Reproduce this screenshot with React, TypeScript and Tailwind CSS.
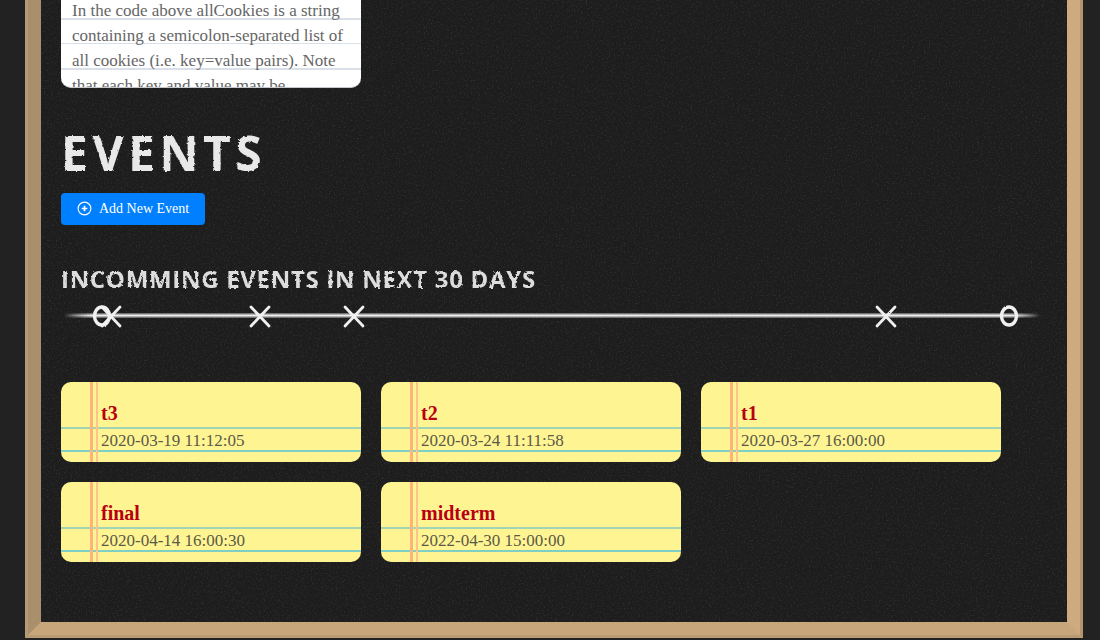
const events = [
    { title: 't3', date: '2020-03-19 11:12:05' },
    { title: 't2', date: '2020-03-24 11:11:58' },
    { title: 't1', date: '2020-03-27 16:00:00' },
    { title: 'final', date: '2020-04-14 16:00:30' },
    { title: 'midterm', date: '2022-04-30 15:00:00' },
];

const crosses = [111, 260, 354, 886];

function ChalkFilters() {
    return (
        <svg className="absolute h-0 w-0">
            <defs>
                <filter id="chalk" x="-5%" y="-10%" width="110%" height="120%">
                    <feTurbulence type="fractalNoise" baseFrequency="0.3" numOctaves="2" seed="4" result="noise" />
                    <feDisplacementMap in="SourceGraphic" in2="noise" scale="3" />
                </filter>
                <filter id="rough" x="-2%" y="-20%" width="104%" height="140%">
                    <feTurbulence type="fractalNoise" baseFrequency="0.5" numOctaves="2" seed="7" result="noise" />
                    <feDisplacementMap in="SourceGraphic" in2="noise" scale="1.6" />
                </filter>
                <filter id="grain">
                    <feTurbulence type="fractalNoise" baseFrequency="0.6" numOctaves="3" seed="9" />
                    <feColorMatrix values="0 0 0 0 1  0 0 0 0 1  0 0 0 0 1  1.2 0 0 0 -0.62" />
                </filter>
            </defs>
        </svg>
    );
}

function Timeline() {
    return (
        <svg className="mt-[7px] block h-[30px] w-[986px]" viewBox="0 0 986 30">
            <defs>
                <linearGradient id="fade">
                    <stop offset="0" stopColor="#fff" stopOpacity="0" />
                    <stop offset="0.03" stopColor="#f0f0f0" />
                    <stop offset="0.97" stopColor="#f0f0f0" />
                    <stop offset="1" stopColor="#fff" stopOpacity="0" />
                </linearGradient>
            </defs>
            <rect x="3" y="11" width="976" height="5" fill="url(#fade)" opacity="0.4" />
            <rect x="3" y="12.5" width="976" height="2" fill="url(#fade)" />
            <g stroke="#f0f0f0" strokeWidth="2.8" fill="none" strokeLinecap="round" filter="url(#rough)">
                {crosses.map((x) => (
                    <path key={x} d={`M${x - 61 - 9} 5 L${x - 61 + 9} 24 M${x - 61 + 9} 5 L${x - 61 - 9} 24`} />
                ))}
                <ellipse cx="41" cy="14" rx="7.5" ry="9" strokeWidth="3.4" />
                <ellipse cx="948" cy="14" rx="7.5" ry="9" strokeWidth="3.4" />
            </g>
        </svg>
    );
}

function EventCard({ title, date }: { title: string; date: string }) {
    return (
        <div className="h-20 w-[300px] overflow-hidden rounded-[10px] bg-[#fff492] bg-[linear-gradient(to_right,transparent_29px,#ffb27a_29px,#ffb27a_32px,transparent_32px,transparent_35px,#ffc48a_35px,#ffc48a_37px,transparent_37px),linear-gradient(to_bottom,transparent_45px,#a0d4b4_45px,#a0d4b4_47px,transparent_47px,transparent_68.5px,#80cfc4_68.5px,#80cfc4_70.5px,transparent_70.5px)] pl-10 pt-[18px]">
            <div className="text-[20px] font-bold leading-[26px] text-[#b80014]">{title}</div>
            <div className="text-[17px] leading-[30px] text-[#5a5a48]">{date}</div>
        </div>
    );
}

export default function App() {
    return (
        <div className="h-[640px] overflow-hidden bg-[#222222] pl-[25px] pr-[17px] font-['Liberation_Serif',serif]">
            <ChalkFilters />
            <div className="h-[638px] border-x-[3px] border-b-[3px] border-l-[#b39a78] border-r-[#b3946f] border-b-[#b89a74]">
                <div className="relative h-[635px] border-x-[13px] border-b-[13px] border-l-[#a98f6c] border-r-[#cdaa80] border-b-[#c8a67c] bg-[#1d1d1d] px-5">
                    <svg className="pointer-events-none absolute inset-0 h-full w-full opacity-20">
                        <rect width="100%" height="100%" filter="url(#grain)" />
                    </svg>
                    <div className="relative">
                        <div className="h-[88px] w-[300px] overflow-hidden rounded-b-[10px] border-b border-[#c4c8cc] bg-white">
                            <div className="-mt-[2px] bg-[repeating-linear-gradient(to_bottom,transparent_0,transparent_20px,#d9e0e8_20px,#d9e0e8_21.5px,transparent_21.5px,transparent_25px)] px-[11px] text-[17px] leading-[25px] text-[#666666]">
                                In the code above allCookies is a string containing a semicolon-separated list of all cookies (i.e. key=value pairs). Note that each key and value may be surrounded by whitespace
                            </div>
                        </div>

                        <h1 className="mt-[38px] font-['Open_Sans',sans-serif] text-[48px] font-bold leading-[54px] tracking-[4.5px] text-[#e8e8e8] [filter:url(#chalk)]">
                            EVENTS
                        </h1>

                        <button className="mt-[13px] flex h-8 w-36 items-center gap-[7px] rounded-[4px] bg-[#0080ff] pl-4 text-sm text-white">
                            <svg className="mb-[2px] h-[15px] w-[15px]" viewBox="0 0 16 16" fill="none" stroke="currentColor">
                                <circle cx="8" cy="8" r="6.8" strokeWidth="1.2" />
                                <path d="M8 5v6M5 8h6" strokeWidth="1.8" />
                            </svg>
                            Add New Event
                        </button>

                        <h2 className="mt-[38px] font-['Open_Sans',sans-serif] text-[24px] font-bold leading-[32px] tracking-[0.7px] text-[#dddddd] [filter:url(#chalk)]">
                            INCOMMING EVENTS IN NEXT 30 DAYS
                        </h2>

                        <Timeline />

                        <div className="mt-[50px] flex flex-wrap gap-5">
                            {events.map((event) => (
                                <EventCard key={event.title} title={event.title} date={event.date} />
                            ))}
                        </div>
                    </div>
                </div>
            </div>
        </div>
    );
}
